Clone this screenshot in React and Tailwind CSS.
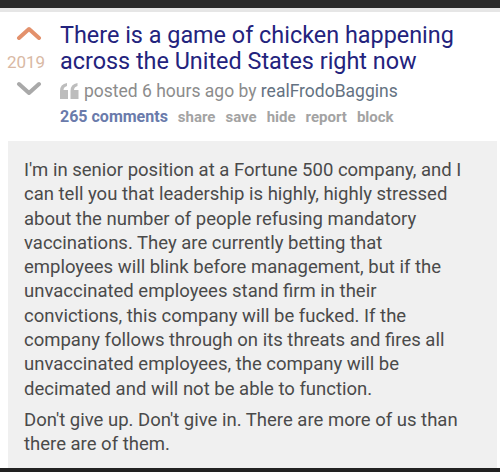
export default function App() {
  const font = { fontFamily: 'Roboto, "Noto Sans", sans-serif' };
  const lines = [
    "I'm in senior position at a Fortune 500 company, and I",
    'can tell you that leadership is highly, highly stressed',
    'about the number of people refusing mandatory',
    'vaccinations. They are currently betting that',
    'employees will blink before management, but if the',
    'unvaccinated employees stand firm in their',
    'convictions, this company will be fucked. If the',
    'company follows through on its threats and fires all',
    'unvaccinated employees, the company will be',
    'decimated and will not be able to function.',
  ];
  return (
    <div className="w-[500px] h-[472px] bg-white overflow-hidden flex flex-col" style={font}>
      <div className="h-[8px] bg-[#2a2a2a]" />
      <div className="h-[4px] bg-[#e6e6e6]" />
      <div className="flex pt-[10px]">
        <div className="w-[56px] flex flex-col items-center pt-[4px]">
          <svg width="26" height="14" viewBox="0 0 26 14" className="ml-[2px]">
            <path d="M3 12 L13 3 L23 12" fill="none" stroke="#e3916c" strokeWidth="4" strokeLinecap="round" strokeLinejoin="round" />
          </svg>
          <div className="text-[17px] leading-none mt-[14px] text-[#d9b9a4] -ml-[4px]">2019</div>
          <svg width="26" height="14" viewBox="0 0 26 14" className="mt-[10px] ml-[2px]">
            <path d="M3 3 L13 12 L23 3" fill="none" stroke="#a9a9a9" strokeWidth="4" strokeLinecap="round" strokeLinejoin="round" />
          </svg>
        </div>
        <div className="flex-1 pl-[4px]">
          <div className="text-[23.4px] leading-[26px] text-[#23237d]">
            There is a game of chicken happening
            <br />
            across the United States right now
          </div>
          <div className="flex items-center mt-[5px] text-[17.5px] leading-[24px] text-[#8c8c8c]">
            <svg width="19" height="16" viewBox="0 0 19 16" className="mr-[5px]">
              <path d="M0 8 Q0 1 7 0 L7 3 Q3.5 4 3.5 7 L8 7 L8 16 L0 16 Z" fill="#bdbdbd" />
              <path d="M10.5 8 Q10.5 1 17.5 0 L17.5 3 Q14 4 14 7 L18.5 7 L18.5 16 L10.5 16 Z" fill="#bdbdbd" />
            </svg>
            <span>posted 6 hours ago by&nbsp;</span>
            <span className="text-[#647282]">realFrodoBaggins</span>
          </div>
          <div className="flex items-baseline gap-[10px] mt-[3px] text-[15px] leading-[22px] font-bold text-[#a3a3a3]">
            <span className="text-[16px] text-[#6a7bab]">265 comments</span>
            <span>share</span>
            <span>save</span>
            <span>hide</span>
            <span>report</span>
            <span>block</span>
          </div>
        </div>
      </div>
      <div className="ml-[8px] mr-[3px] mt-[13px] flex-1 bg-[#f0f0f0] px-[16px] pt-[17px] text-[18.5px] leading-[24.3px] text-[#4a4a4a]">
        <div>
          {lines.map((l, i) => (
            <div key={i} className="whitespace-nowrap">
              {l}
            </div>
          ))}
        </div>
        <div className="mt-[7px]">
          <div className="whitespace-nowrap">Don't give up. Don't give in. There are more of us than</div>
          <div className="whitespace-nowrap">there are of them.</div>
        </div>
      </div>
      <div className="h-[4px] bg-[#222]" />
    </div>
  );
}
